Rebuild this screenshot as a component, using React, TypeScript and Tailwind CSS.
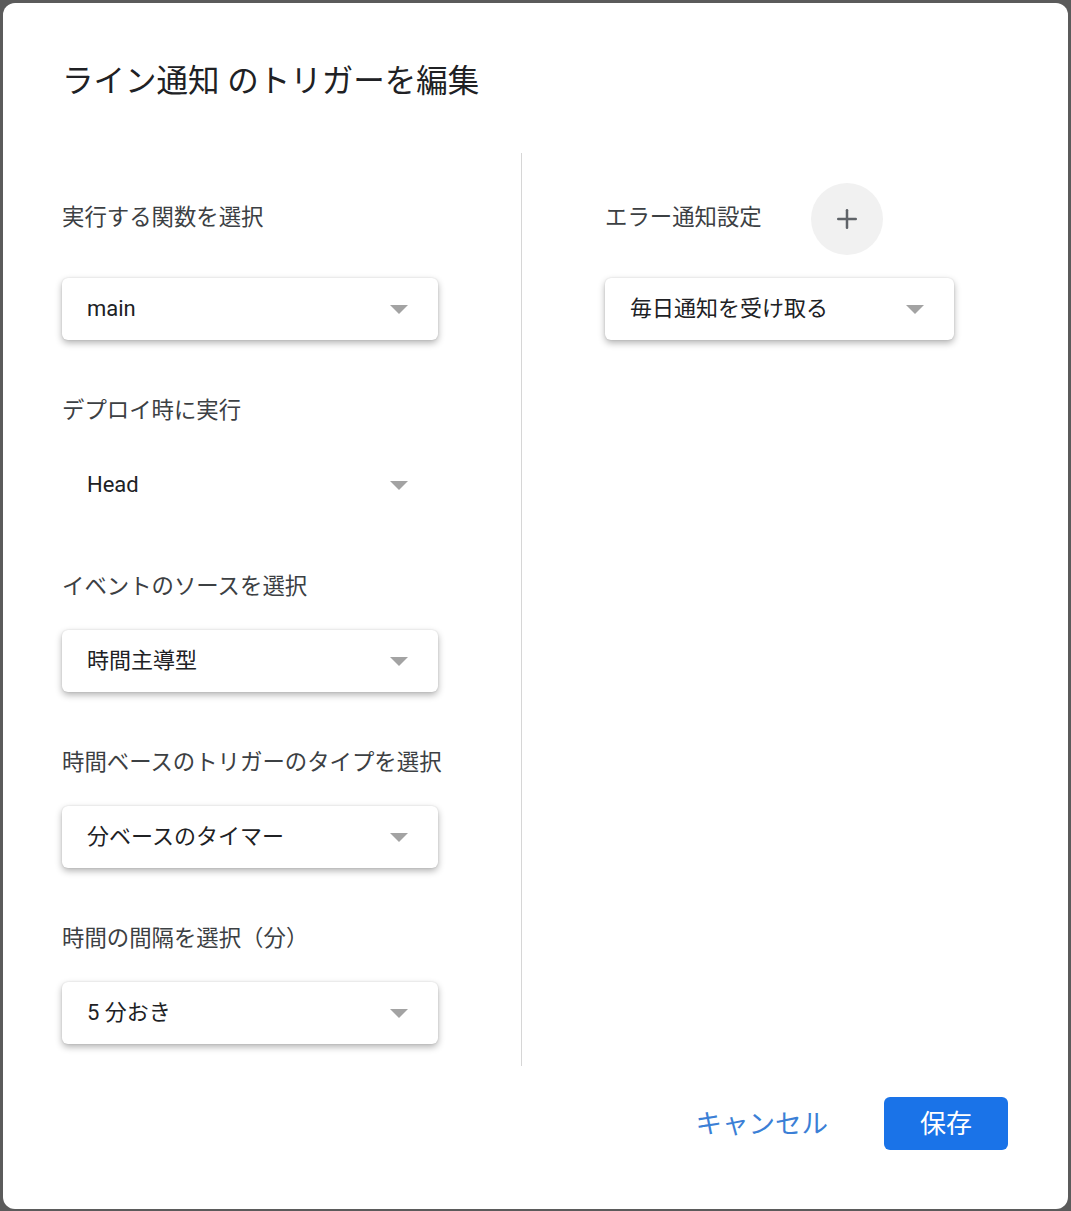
import { Plus } from "lucide-react";

const font = "font-['Roboto','Noto_Sans_CJK_JP',sans-serif]";

function Arrow() {
  return (
    <svg width="18" height="9" viewBox="0 0 18 9" className="shrink-0">
      <path d="M0 0 L18 0 L9 9 Z" fill="#a3a3a3" />
    </svg>
  );
}

function Select({ value, flat = false, width = "w-[376px]" }: { value: string; flat?: boolean; width?: string }) {
  return (
    <div
      className={`${width} h-[62px] flex items-center justify-between pl-[25px] pr-[30px] rounded-[6px] bg-white ${
        flat ? "" : "shadow-[0_3px_7px_rgba(0,0,0,0.3),0_0_2px_rgba(0,0,0,0.12)]"
      }`}
    >
      <span className="text-[22px] leading-[30px] text-[#202124]">{value}</span>
      <Arrow />
    </div>
  );
}

function Label({ children }: { children: string }) {
  return <div className="text-[22.4px] leading-[30px] text-[#3c4043]">{children}</div>;
}

export default function App() {
  return (
    <div className={`w-[1071px] h-[1211px] bg-[#5b5b5b] p-[3px] pb-[2px] ${font}`}>
      <div className="w-full h-full bg-white rounded-[12px] flex flex-col">
        <h1 className="pl-[59px] pt-[59px] text-[31.5px] leading-[40px] text-[#202124] font-normal">
          ライン通知 のトリガーを編集
        </h1>

        <div className="flex mt-[51px] pl-[59px] h-[913px]">
          <div className="w-[459px] pt-[49px] flex flex-col">
            <Label>実行する関数を選択</Label>
            <div className="mt-[46px]">
              <Select value="main" />
            </div>

            <div className="mt-[55px]">
              <Label>デプロイ時に実行</Label>
            </div>
            <div className="mt-[29px]">
              <Select value="Head" flat />
            </div>

            <div className="mt-[55px]">
              <Label>イベントのソースを選択</Label>
            </div>
            <div className="mt-[29px]">
              <Select value="時間主導型" />
            </div>

            <div className="mt-[55px]">
              <Label>時間ベースのトリガーのタイプを選択</Label>
            </div>
            <div className="mt-[29px]">
              <Select value="分ベースのタイマー" />
            </div>

            <div className="mt-[55px]">
              <Label>時間の間隔を選択（分）</Label>
            </div>
            <div className="mt-[29px]">
              <Select value="5 分おき" />
            </div>
          </div>

          <div className="w-px bg-[#d6d6d6]" />

          <div className="pl-[83px] pt-[30px] flex flex-col">
            <div className="flex items-center h-[72px]">
              <span className="text-[22.4px] leading-[30px] text-[#3c4043] -mt-[4px]">エラー通知設定</span>
              <button className="ml-[49px] w-[72px] h-[72px] rounded-full bg-[#f1f1f1] flex items-center justify-center text-[#5f6368]">
                <Plus size={30} strokeWidth={2} />
              </button>
            </div>
            <div className="mt-[23px]">
              <Select value="毎日通知を受け取る" width="w-[349px]" />
            </div>
          </div>
        </div>

        <div className="flex justify-end items-center mt-[31px] pr-[60px] gap-[56px]">
          <button className="text-[26.5px] leading-[34px] text-[#3b7fd6]">キャンセル</button>
          <button className="w-[124px] h-[53px] rounded-[6px] bg-[#1a73e8] text-white text-[26px] leading-[34px]">
            保存
          </button>
        </div>
      </div>
    </div>
  );
}
